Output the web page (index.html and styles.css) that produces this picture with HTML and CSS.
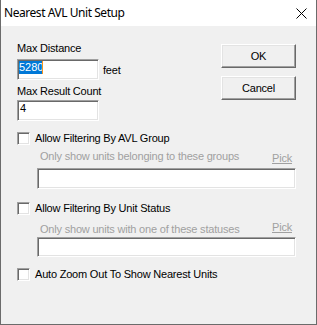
FILE: index.html
```html
<!DOCTYPE html>
<html>
<head>
<meta charset="utf-8">
<link rel="stylesheet" href="styles.css">
</head>
<body>
<div class="window">
  <div class="titlebar">
    <span class="title">Nearest AVL Unit Setup</span>
    <svg class="close" width="11" height="11" viewBox="0 0 11 11">
      <path d="M0.5 0.5 L10.5 10.5 M10.5 0.5 L0.5 10.5" stroke="#000" stroke-width="1" fill="none"/>
    </svg>
  </div>
  <div class="client">
    <div class="top">
      <div class="fields">
        <div class="label">Max Distance</div>
        <div class="field-row">
          <div class="input"><span class="sel">5280</span><span class="caret"></span></div>
          <span class="unit">feet</span>
        </div>
        <div class="label label2">Max Result Count</div>
        <div class="input"><span class="val">4</span></div>
      </div>
      <div class="buttons">
        <div class="btn">OK</div>
        <div class="btn">Cancel</div>
      </div>
    </div>

    <div class="group g1">
      <div class="check"><span class="box"></span><span>Allow Filtering By AVL Group</span></div>
      <div class="hint"><span>Only show units belonging to these groups</span><span class="pick pick1">Pick</span></div>
      <div class="input wide"></div>
    </div>

    <div class="group g2">
      <div class="check"><span class="box"></span><span>Allow Filtering By Unit Status</span></div>
      <div class="hint"><span>Only show units with one of these statuses</span><span class="pick pick2">Pick</span></div>
      <div class="input wide w2"></div>
    </div>

    <div class="group g3">
      <div class="check"><span class="box"></span><span>Auto Zoom Out To Show Nearest Units</span></div>
    </div>
  </div>
</div>
</body>
</html>
```

FILE: styles.css
```css
html, body {
  margin: 0;
  padding: 0;
  background: #f0f0f0;
}

.window {
  width: 317px;
  height: 325px;
  box-sizing: border-box;
  border: 1px solid #6b6b6b;
  border-top: none;
  background: #f0f0f0;
  display: flex;
  flex-direction: column;
  font-family: "Liberation Sans", Arial, sans-serif;
  font-size: 11px;
  letter-spacing: -0.2px;
  color: #000;
}

.titlebar {
  height: 26px;
  flex-shrink: 0;
  background: #fff;
  display: flex;
  justify-content: space-between;
  align-items: flex-start;
}

.title {
  font-family: "Noto Sans", sans-serif;
  font-size: 12px;
  line-height: 16px;
  letter-spacing: -0.45px;
  padding: 5px 0 0 3px;
}

.close {
  margin: 8px 9px 0 0;
  display: block;
}

.client {
  padding: 16px 20px 0 16px;
  display: flex;
  flex-direction: column;
}

.top {
  display: flex;
  justify-content: space-between;
  align-items: flex-start;
}

.fields {
  display: flex;
  flex-direction: column;
}

.label {
  line-height: 13px;
  margin-bottom: 4px;
}

.label2 {
  margin-top: 5px;
  margin-bottom: 2px;
}

.field-row {
  display: flex;
  align-items: center;
}

.unit {
  margin-left: 4px;
  padding-top: 2px;
  line-height: 13px;
}

.input {
  width: 82px;
  height: 21px;
  box-sizing: border-box;
  background: #fff;
  border: 1px solid;
  border-color: #a0a0a0 #fff #fff #a0a0a0;
  box-shadow: inset 1px 1px #696969, inset -1px -1px #e3e3e3;
  padding: 1px 1px 0 1px;
  display: flex;
  align-items: flex-start;
  line-height: 13px;
}

.sel {
  background: #0078d7;
  color: #fff;
  display: inline-block;
  line-height: 13px;
  letter-spacing: 0;
}

.caret {
  display: inline-block;
  width: 1px;
  height: 13px;
  background: #f7941d;
  margin-left: -1px;
}

.val {
  padding-left: 1px;
}

.buttons {
  display: flex;
  flex-direction: column;
  gap: 8px;
  margin-top: 2px;
}

.btn {
  width: 75px;
  height: 24px;
  box-sizing: border-box;
  background: #f0f0f0;
  border: 1px solid;
  border-color: #fff #696969 #696969 #fff;
  box-shadow: inset -1px -1px #a0a0a0, inset 1px 1px #e3e3e3;
  display: flex;
  align-items: center;
  justify-content: center;
  line-height: 13px;
}

.group {
  display: flex;
  flex-direction: column;
}

.g1 { margin-top: 11px; }
.g2 { margin-top: 13px; }
.g3 { margin-top: 11px; }

.check {
  display: flex;
  align-items: center;
  height: 13px;
  line-height: 13px;
}

.box {
  width: 13px;
  height: 13px;
  box-sizing: border-box;
  background: #fff;
  border: 1px solid;
  border-color: #a0a0a0 #fff #fff #a0a0a0;
  box-shadow: inset 1px 1px #696969, inset -1px -1px #e3e3e3;
  margin-right: 5px;
  flex-shrink: 0;
}

.hint {
  display: flex;
  justify-content: space-between;
  align-items: flex-start;
  margin-left: 23px;
  width: 252px;
  line-height: 13px;
  color: #a0a0a0;
}

.g1 .hint { margin-top: 5px; }
.g2 .hint { margin-top: 8px; }

.pick {
  text-decoration: underline;
}

.pick1 { margin-top: 2px; margin-bottom: -2px; }
.pick2 { margin-top: -2px; }

.wide {
  width: 259px;
  margin-left: 20px;
}

.g1 .wide { margin-top: 5px; }
.g2 .wide { margin-top: 1px; height: 20px; }
```
